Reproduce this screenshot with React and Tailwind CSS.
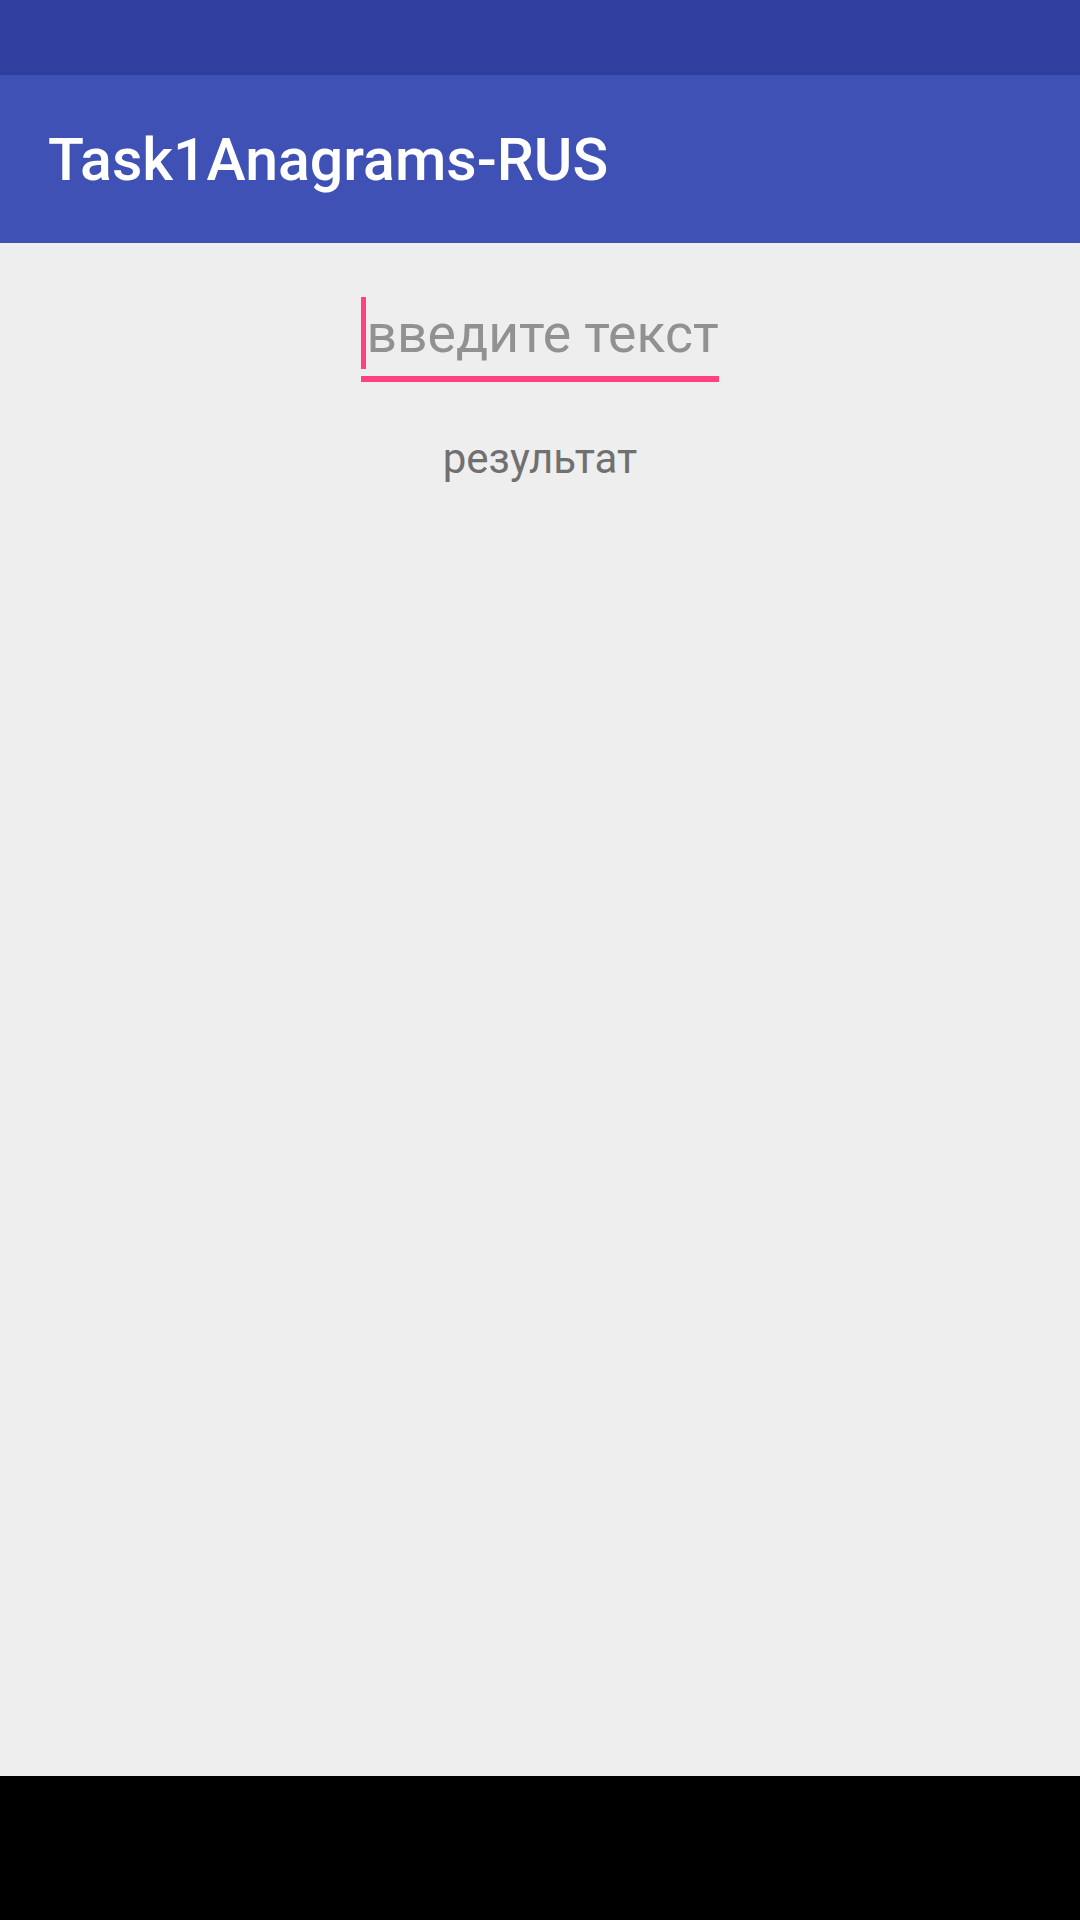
export default function App() {
  return (
    <div className="h-[1920px] w-[1080px] flex flex-col bg-[#eeeeee] font-['Roboto',sans-serif]">
      {/* status bar */}
      <div className="h-[75px] shrink-0 bg-[#303f9f]" />

      {/* app bar */}
      <div className="h-[168px] shrink-0 bg-[#3f51b5] flex items-center px-[48px]">
        <h1 className="text-white text-[59px] font-medium leading-none">
          Task1Anagrams-RUS
        </h1>
      </div>

      {/* content */}
      <div className="flex-1 flex flex-col items-center pt-[54px]">
        <div className="flex flex-col">
          <div className="flex items-start h-[72px]">
            <div className="w-[5px] h-[72px] bg-[#ff4081]" />
            <span className="text-[53.5px] leading-[74px] text-[#919191] whitespace-nowrap">
              введите текст
            </span>
          </div>
          <div className="h-[6px] mt-[7px] bg-[#ff4081]" />
        </div>
        <p className="mt-[47px] text-[42px] leading-[60px] text-[#707070]">
          результат
        </p>
      </div>

      {/* nav bar */}
      <div className="h-[144px] shrink-0 bg-black" />
    </div>
  );
}
